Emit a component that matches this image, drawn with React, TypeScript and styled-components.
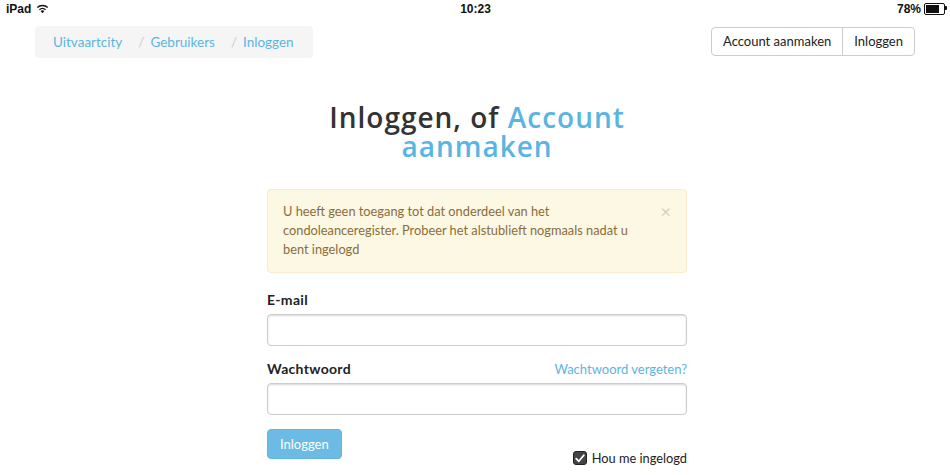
import styled, { createGlobalStyle } from "styled-components";

const GlobalStyle = createGlobalStyle`
  html, body {
    margin: 0;
    padding: 0;
    background: #fff;
  }
  body {
    font-family: Lato, "Liberation Sans", sans-serif;
    font-size: 13px;
    color: #333;
  }
`;

const crumbs = ["Uitvaartcity", "Gebruikers", "Inloggen"];

const App = () => {
  return (
    <Page>
      <GlobalStyle />
      <StatusBar>
        <StatusLeft>
          iPad
          <svg width="13" height="10" viewBox="0 0 13 10">
            <path d="M6.5 9.2 L4.6 7.1 A2.8 2.8 0 0 1 8.4 7.1 Z" fill="#111" />
            <path d="M3.4 5.8 A4.6 4.6 0 0 1 9.6 5.8" stroke="#111" strokeWidth="1.4" fill="none" />
            <path d="M1.3 3.6 A7.4 7.4 0 0 1 11.7 3.6" stroke="#111" strokeWidth="1.4" fill="none" />
          </svg>
        </StatusLeft>
        <StatusTime>10:23</StatusTime>
        <StatusRight>
          78%
          <Battery>
            <BatteryFill />
          </Battery>
        </StatusRight>
      </StatusBar>

      <Header>
        <Breadcrumb>
          {crumbs.map((c, i) => (
            <Crumb key={c}>
              {i > 0 && <Separator>/</Separator>}
              {c}
            </Crumb>
          ))}
        </Breadcrumb>
        <ButtonGroup>
          <GroupButton>Account aanmaken</GroupButton>
          <GroupButton>Inloggen</GroupButton>
        </ButtonGroup>
      </Header>

      <Main>
        <Title>
          Inloggen, of <TitleLink>Account aanmaken</TitleLink>
        </Title>

        <Form>
          <Alert>
            <span>
              U heeft geen toegang tot dat onderdeel van het condoleanceregister.
              Probeer het alstublieft nogmaals nadat u bent ingelogd
            </span>
            <Close>×</Close>
          </Alert>

          <Field>
            <LabelRow>
              <Label>E-mail</Label>
            </LabelRow>
            <Input type="email" />
          </Field>

          <Field>
            <LabelRow>
              <Label>Wachtwoord</Label>
              <Link>Wachtwoord vergeten?</Link>
            </LabelRow>
            <Input type="password" />
          </Field>

          <Actions>
            <SubmitButton>Inloggen</SubmitButton>
            <Remember>
              <CheckBox>
                <svg width="10" height="9" viewBox="0 0 10 9">
                  <path d="M1.2 4.6 L3.8 7.3 L8.8 1.2" stroke="#fff" strokeWidth="1.8" fill="none" strokeLinecap="round" strokeLinejoin="round" />
                </svg>
              </CheckBox>
              Hou me ingelogd
            </Remember>
          </Actions>
        </Form>
      </Main>
    </Page>
  );
};
export default App;

// styles
const Page = styled.div`
  width: 950px;
  height: 475px;
  overflow: hidden;
`;

const StatusBar = styled.div`
  height: 18px;
  display: grid;
  grid-template-columns: 1fr auto 1fr;
  align-items: center;
  padding: 0 5px 0 6px;
  font-family: "Liberation Sans", Arial, sans-serif;
  font-size: 12px;
  font-weight: bold;
  color: #111;
`;

const StatusLeft = styled.div`
  display: flex;
  align-items: center;
  gap: 5px;
`;

const StatusTime = styled.div`
  text-align: center;
`;

const StatusRight = styled.div`
  display: flex;
  justify-content: flex-end;
  align-items: center;
  gap: 3px;
`;

const Battery = styled.div`
  width: 17px;
  height: 8px;
  border: 1px solid #111;
  border-radius: 2px;
  padding: 1px;
  position: relative;

  &::after {
    content: "";
    position: absolute;
    right: -3px;
    top: 2px;
    width: 2px;
    height: 4px;
    background: #111;
    border-radius: 0 1px 1px 0;
  }
`;

const BatteryFill = styled.div`
  width: 78%;
  height: 100%;
  background: #111;
`;

const Header = styled.div`
  display: flex;
  justify-content: space-between;
  align-items: flex-start;
  padding: 8px 35px 0 35px;
`;

const Breadcrumb = styled.ul`
  display: flex;
  list-style: none;
  margin: 0;
  padding: 8px 19px 8px 18px;
  background: #f5f5f5;
  border-radius: 4px;
  line-height: 16px;
`;

const Crumb = styled.li`
  color: #5bb5e2;
  font-size: 13.5px;
`;

const Separator = styled.span`
  color: #ccc;
  margin: 0 6px 0 16px;
`;

const ButtonGroup = styled.div`
  display: flex;
  margin-top: 1px;
`;

const GroupButton = styled.button`
  font-family: Lato, "Liberation Sans", sans-serif;
  font-size: 13px;
  color: #222;
  background: #fff;
  border: 1px solid #ccc;
  padding: 5px 11px;
  line-height: 17px;
  cursor: pointer;

  &:first-child {
    border-radius: 4px 0 0 4px;
  }
  & + & {
    margin-left: -1px;
    border-radius: 0 4px 4px 0;
  }
`;

const Main = styled.div`
  display: flex;
  flex-direction: column;
  align-items: center;
  padding-left: 4px;
`;

const Title = styled.h1`
  width: 320px;
  margin: 45px 0 0;
  font-family: "Open Sans", sans-serif;
  font-weight: 600;
  font-size: 28px;
  line-height: 29px;
  letter-spacing: 1px;
  text-align: center;
  color: #333;
`;

const TitleLink = styled.span`
  color: #5bb5e2;
`;

const Form = styled.div`
  width: 420px;
  margin-top: 28px;
  display: flex;
  flex-direction: column;
`;

const Alert = styled.div`
  display: flex;
  justify-content: space-between;
  align-items: flex-start;
  gap: 16px;
  padding: 12px 15px 13px;
  background: #fcf8e3;
  border: 1px solid #faebcc;
  border-radius: 4px;
  color: #8a6d3b;
  font-size: 12.8px;
  line-height: 19px;
`;

const Close = styled.span`
  color: #d6cfb6;
  font-size: 18px;
  line-height: 18px;
`;

const Field = styled.div`
  display: flex;
  flex-direction: column;
  margin-top: 18px;

  & + & {
    margin-top: 14px;
  }
`;

const LabelRow = styled.div`
  display: flex;
  justify-content: space-between;
  align-items: baseline;
  margin-bottom: 6px;
`;

const Label = styled.label`
  font-weight: bold;
  font-size: 14px;
  color: #222;
  line-height: 17px;
  letter-spacing: 0.3px;
`;

const Link = styled.a`
  color: #5bb5e2;
  font-size: 13px;
  cursor: pointer;
`;

const Input = styled.input`
  box-sizing: border-box;
  height: 32px;
  width: 100%;
  border: 1px solid #ccc;
  border-radius: 4px;
  box-shadow: inset 0 1px 2px rgba(0, 0, 0, 0.15);
  padding: 6px 10px;
  font-size: 14px;
`;

const Actions = styled.div`
  display: flex;
  justify-content: space-between;
  align-items: flex-start;
  margin-top: 14px;
`;

const SubmitButton = styled.button`
  font-family: Lato, "Liberation Sans", sans-serif;
  font-size: 13px;
  color: #fff;
  background: #6cbbe4;
  border: 1px solid #62b5e0;
  border-radius: 4px;
  padding: 5px 12px;
  line-height: 18px;
  height: 30px;
`;

const Remember = styled.label`
  display: flex;
  align-items: center;
  gap: 5px;
  margin-top: 21px;
  font-size: 12.8px;
  color: #222;
`;

const CheckBox = styled.span`
  width: 14px;
  height: 14px;
  box-sizing: border-box;
  border-radius: 3px;
  background: #444;
  border: 1px solid #222;
  display: flex;
  align-items: center;
  justify-content: center;
`;
